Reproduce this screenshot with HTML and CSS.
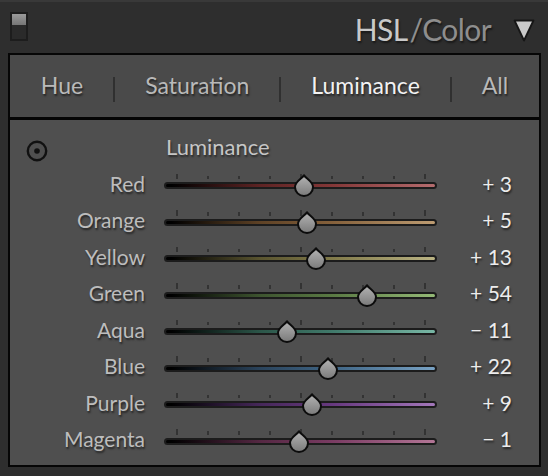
FILE: index.html
```
<!DOCTYPE html>
<html>
<head>
<meta charset="utf-8">
<link rel="stylesheet" href="styles.css">
</head>
<body>
<div class="topline"></div>
<header class="head">
  <div class="toggle"><div class="toggle-on"></div></div>
  <div class="title"><span class="t-main">HSL</span><span class="t-sub slash">/</span><span class="t-sub">Color</span></div>
  <svg class="collapse" width="24" height="26" viewBox="0 0 24 26"><path d="M2.5 3.5 L21.5 3.5 L12 23.5 Z" fill="#c9c9c9" stroke="#161616" stroke-width="1.8" stroke-linejoin="round"/></svg>
</header>
<section class="panel">
  <nav class="tabs">
    <span class="tab">Hue</span><span class="sep"></span>
    <span class="tab">Saturation</span><span class="sep"></span>
    <span class="tab active">Luminance</span><span class="sep"></span>
    <span class="tab">All</span>
  </nav>
  <div class="content">
    <div class="sec-head">
      <svg class="target" width="24" height="24" viewBox="0 0 24 24"><circle cx="12" cy="12" r="9.2" fill="none" stroke="#111" stroke-width="2.4"/><circle cx="12" cy="12" r="2.8" fill="#111"/></svg>
      <span class="sec-title">Luminance</span>
    </div>

    <div class="row">
      <span class="label">Red</span>
      <div class="slider">
        <div class="ticks"><i class="tall"></i><i></i><i></i><i></i><i class="tall"></i><i></i><i></i><i></i><i class="tall"></i></div>
        <div class="track red"></div>
        <svg class="thumb" style="--v:3" viewBox="0 0 22 23"><defs><linearGradient id="g1" x1="0" y1="0" x2="0" y2="1"><stop offset="0" stop-color="#b4b4b4"/><stop offset="1" stop-color="#7a7a7a"/></linearGradient></defs><path d="M11 1.2 C12.8 4.5 20 7.5 20 13 A9 9 0 0 1 2 13 C2 7.5 9.2 4.5 11 1.2 Z" fill="url(#g1)" stroke="#0c0c0c" stroke-width="2" stroke-linejoin="round"/></svg>
      </div>
      <span class="value">+ 3</span>
    </div>

    <div class="row">
      <span class="label">Orange</span>
      <div class="slider">
        <div class="ticks"><i class="tall"></i><i></i><i></i><i></i><i class="tall"></i><i></i><i></i><i></i><i class="tall"></i></div>
        <div class="track orange"></div>
        <svg class="thumb" style="--v:5" viewBox="0 0 22 23"><defs><linearGradient id="g2" x1="0" y1="0" x2="0" y2="1"><stop offset="0" stop-color="#b4b4b4"/><stop offset="1" stop-color="#7a7a7a"/></linearGradient></defs><path d="M11 1.2 C12.8 4.5 20 7.5 20 13 A9 9 0 0 1 2 13 C2 7.5 9.2 4.5 11 1.2 Z" fill="url(#g2)" stroke="#0c0c0c" stroke-width="2" stroke-linejoin="round"/></svg>
      </div>
      <span class="value">+ 5</span>
    </div>

    <div class="row">
      <span class="label">Yellow</span>
      <div class="slider">
        <div class="ticks"><i class="tall"></i><i></i><i></i><i></i><i class="tall"></i><i></i><i></i><i></i><i class="tall"></i></div>
        <div class="track yellow"></div>
        <svg class="thumb" style="--v:13" viewBox="0 0 22 23"><defs><linearGradient id="g3" x1="0" y1="0" x2="0" y2="1"><stop offset="0" stop-color="#b4b4b4"/><stop offset="1" stop-color="#7a7a7a"/></linearGradient></defs><path d="M11 1.2 C12.8 4.5 20 7.5 20 13 A9 9 0 0 1 2 13 C2 7.5 9.2 4.5 11 1.2 Z" fill="url(#g3)" stroke="#0c0c0c" stroke-width="2" stroke-linejoin="round"/></svg>
      </div>
      <span class="value">+ 13</span>
    </div>

    <div class="row">
      <span class="label">Green</span>
      <div class="slider">
        <div class="ticks"><i class="tall"></i><i></i><i></i><i></i><i class="tall"></i><i></i><i></i><i></i><i class="tall"></i></div>
        <div class="track green"></div>
        <svg class="thumb" style="--v:54" viewBox="0 0 22 23"><defs><linearGradient id="g4" x1="0" y1="0" x2="0" y2="1"><stop offset="0" stop-color="#b4b4b4"/><stop offset="1" stop-color="#7a7a7a"/></linearGradient></defs><path d="M11 1.2 C12.8 4.5 20 7.5 20 13 A9 9 0 0 1 2 13 C2 7.5 9.2 4.5 11 1.2 Z" fill="url(#g4)" stroke="#0c0c0c" stroke-width="2" stroke-linejoin="round"/></svg>
      </div>
      <span class="value">+ 54</span>
    </div>

    <div class="row">
      <span class="label">Aqua</span>
      <div class="slider">
        <div class="ticks"><i class="tall"></i><i></i><i></i><i></i><i class="tall"></i><i></i><i></i><i></i><i class="tall"></i></div>
        <div class="track aqua"></div>
        <svg class="thumb" style="--v:-11" viewBox="0 0 22 23"><defs><linearGradient id="g5" x1="0" y1="0" x2="0" y2="1"><stop offset="0" stop-color="#b4b4b4"/><stop offset="1" stop-color="#7a7a7a"/></linearGradient></defs><path d="M11 1.2 C12.8 4.5 20 7.5 20 13 A9 9 0 0 1 2 13 C2 7.5 9.2 4.5 11 1.2 Z" fill="url(#g5)" stroke="#0c0c0c" stroke-width="2" stroke-linejoin="round"/></svg>
      </div>
      <span class="value">− 11</span>
    </div>

    <div class="row">
      <span class="label">Blue</span>
      <div class="slider">
        <div class="ticks"><i class="tall"></i><i></i><i></i><i></i><i class="tall"></i><i></i><i></i><i></i><i class="tall"></i></div>
        <div class="track blue"></div>
        <svg class="thumb" style="--v:22" viewBox="0 0 22 23"><defs><linearGradient id="g6" x1="0" y1="0" x2="0" y2="1"><stop offset="0" stop-color="#b4b4b4"/><stop offset="1" stop-color="#7a7a7a"/></linearGradient></defs><path d="M11 1.2 C12.8 4.5 20 7.5 20 13 A9 9 0 0 1 2 13 C2 7.5 9.2 4.5 11 1.2 Z" fill="url(#g6)" stroke="#0c0c0c" stroke-width="2" stroke-linejoin="round"/></svg>
      </div>
      <span class="value">+ 22</span>
    </div>

    <div class="row">
      <span class="label">Purple</span>
      <div class="slider">
        <div class="ticks"><i class="tall"></i><i></i><i></i><i></i><i class="tall"></i><i></i><i></i><i></i><i class="tall"></i></div>
        <div class="track purple"></div>
        <svg class="thumb" style="--v:9" viewBox="0 0 22 23"><defs><linearGradient id="g7" x1="0" y1="0" x2="0" y2="1"><stop offset="0" stop-color="#b4b4b4"/><stop offset="1" stop-color="#7a7a7a"/></linearGradient></defs><path d="M11 1.2 C12.8 4.5 20 7.5 20 13 A9 9 0 0 1 2 13 C2 7.5 9.2 4.5 11 1.2 Z" fill="url(#g7)" stroke="#0c0c0c" stroke-width="2" stroke-linejoin="round"/></svg>
      </div>
      <span class="value">+ 9</span>
    </div>

    <div class="row">
      <span class="label">Magenta</span>
      <div class="slider">
        <div class="ticks"><i class="tall"></i><i></i><i></i><i></i><i class="tall"></i><i></i><i></i><i></i><i class="tall"></i></div>
        <div class="track magenta"></div>
        <svg class="thumb" style="--v:-1" viewBox="0 0 22 23"><defs><linearGradient id="g8" x1="0" y1="0" x2="0" y2="1"><stop offset="0" stop-color="#b4b4b4"/><stop offset="1" stop-color="#7a7a7a"/></linearGradient></defs><path d="M11 1.2 C12.8 4.5 20 7.5 20 13 A9 9 0 0 1 2 13 C2 7.5 9.2 4.5 11 1.2 Z" fill="url(#g8)" stroke="#0c0c0c" stroke-width="2" stroke-linejoin="round"/></svg>
      </div>
      <span class="value">− 1</span>
    </div>
  </div>
</section>
</body>
</html>
```

FILE: styles.css
```
html, body {
  margin: 0;
  padding: 0;
}
body {
  width: 548px;
  height: 476px;
  overflow: hidden;
  background: #2e2e2e;
  font-family: Lato, "Open Sans", sans-serif;
}
.topline {
  height: 2px;
  background: #393939;
}
.head {
  height: 51px;
  display: flex;
  align-items: flex-start;
  padding: 0 14px 0 10px;
  box-sizing: border-box;
}
.toggle {
  margin-top: 10px;
  width: 18px;
  height: 29px;
  box-sizing: border-box;
  border: 2px solid #1d1d1d;
  background: #2a2a2a;
}
.toggle-on {
  height: 11px;
  background: linear-gradient(#9a9a9a, #767676);
}
.title {
  margin-left: auto;
  margin-top: 8px;
  font-size: 30px;
  line-height: 38px;
  letter-spacing: -0.6px;
  text-shadow: 1px 2px 2px rgba(0,0,0,0.5);
}
.t-main { color: #c9c9c9; }
.t-sub { color: #8e8e8e; }
.slash { margin: 0 0 0 2px; }
.collapse {
  margin-left: 21px;
  margin-top: 15px;
  margin-right: -2px;
}
.panel {
  margin-left: 8px;
  width: 533px;
  height: 414px;
  box-sizing: border-box;
  border: 2px solid #060606;
  background: #4f4f4f;
}
.tabs {
  height: 65px;
  box-sizing: border-box;
  border-bottom: 3px solid #050505;
  background: #4a4a4a;
  display: flex;
  align-items: flex-start;
  justify-content: center;
  gap: 30px;
}
.tab {
  font-size: 23px;
  line-height: 60px;
  color: #b9b9b9;
  text-shadow: 1px 2px 2px rgba(0,0,0,0.55);
}
.tab.active {
  color: #f2f2f2;
}
.sep {
  margin-top: 22px;
  width: 2px;
  height: 25px;
  background: #303030;
}
.content {
  display: flex;
  flex-direction: column;
}
.sec-head {
  height: 47.5px;
  display: flex;
  align-items: flex-start;
}
.target {
  margin-left: 15px;
  margin-top: 19px;
}
.sec-title {
  margin-left: 117px;
  margin-top: 11px;
  font-size: 22px;
  line-height: 32px;
  color: #c6c6c6;
  text-shadow: 1px 2px 2px rgba(0,0,0,0.5);
}
.row {
  height: 36.5px;
  display: flex;
  align-items: flex-start;
}
.label {
  width: 135px;
  text-align: right;
  font-size: 21px;
  line-height: 32px;
  color: #bdbdbd;
  text-shadow: 1px 2px 2px rgba(0,0,0,0.55);
}
.value {
  width: 75px;
  text-align: right;
  font-size: 21px;
  line-height: 32px;
  color: #ececec;
  text-shadow: 1px 2px 2px rgba(0,0,0,0.55);
}
.slider {
  position: relative;
  width: 273px;
  margin-left: 19px;
  padding-top: 6.5px;
}
.ticks {
  margin-left: 12px;
  width: 250px;
  height: 5px;
  margin-bottom: 3px;
  display: flex;
  justify-content: space-between;
  align-items: flex-end;
}
.ticks i {
  display: block;
  width: 2px;
  height: 3.5px;
  background: #333;
}
.ticks i.tall {
  height: 5.5px;
}
.track {
  height: 7px;
  box-sizing: border-box;
  border: 2px solid #1c1c1c;
  border-radius: 4px;
}
.red     { background: linear-gradient(to right, #000 2%, #5e2424 35%, #843838 62%, #b46c6e 100%); }
.orange  { background: linear-gradient(to right, #000 2%, #5e4226 35%, #85613c 62%, #bd9c72 100%); }
.yellow  { background: linear-gradient(to right, #000 2%, #5a5530 35%, #817a4a 62%, #bab383 100%); }
.green   { background: linear-gradient(to right, #000 2%, #3e5530 35%, #5a7a44 62%, #94b976 100%); }
.aqua    { background: linear-gradient(to right, #000 2%, #2c5649 35%, #417a6b 62%, #78b7a5 100%); }
.blue    { background: linear-gradient(to right, #000 2%, #2b445c 35%, #3f6585 62%, #78a2c4 100%); }
.purple  { background: linear-gradient(to right, #000 2%, #46285a 35%, #67397f 62%, #a377ba 100%); }
.magenta { background: linear-gradient(to right, #000 2%, #552843 35%, #7a3c63 62%, #b37696 100%); }
.thumb {
  position: absolute;
  top: 6.5px;
  left: calc(125.5px + var(--v) * 1.23px);
  width: 22px;
  height: 23px;
}
```
